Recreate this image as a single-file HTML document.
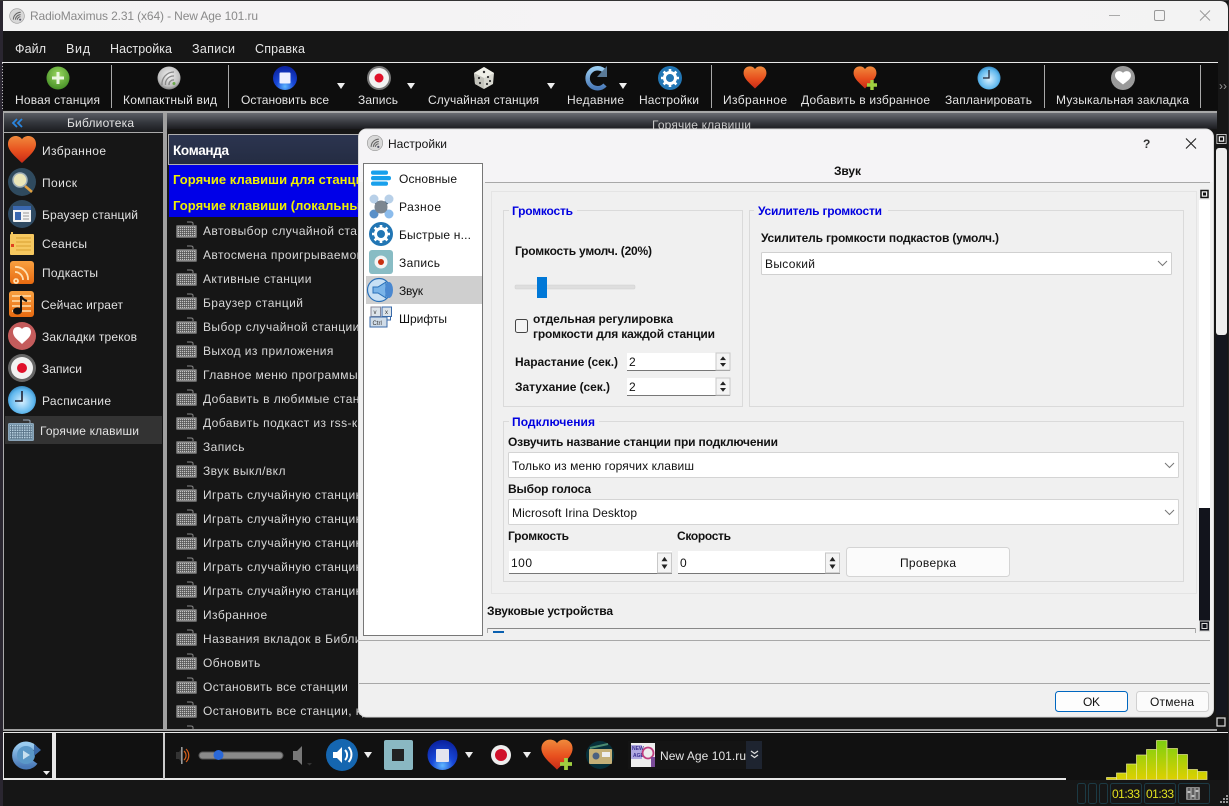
<!DOCTYPE html>
<html lang="ru">
<head>
<meta charset="utf-8">
<title>RadioMaximus</title>
<style>
html,body{margin:0;padding:0;background:#161616;width:1229px;height:806px;overflow:hidden}
svg{display:block;position:absolute;left:0;top:0}
text{font-family:"Liberation Sans","DejaVu Sans",sans-serif;font-size:12px;white-space:pre}
.w{fill:#e4e4e4}
.m{fill:#e6e6e6;font-size:12.5px}
.s{fill:#e2e2e2;font-size:12px}
.r{fill:#d8d8d8;font-size:12px;letter-spacing:.42px}
.b{fill:#111;font-weight:bold}
.n{fill:#111}
.g{fill:#0000e0;font-weight:bold}
.y{fill:#f0f000;font-weight:bold;font-size:13px}
</style>
</head>
<body>
<svg width="1229" height="806" viewBox="0 0 1229 806" xmlns="http://www.w3.org/2000/svg">
<defs>
<linearGradient id="hd" x1="0" y1="0" x2="0" y2="1"><stop offset="0" stop-color="#5a5d64"/><stop offset=".5" stop-color="#34373d"/><stop offset="1" stop-color="#1a1b1e"/></linearGradient>
<linearGradient id="hd2" x1="0" y1="0" x2="0" y2="1"><stop offset="0" stop-color="#6a6c72"/><stop offset=".55" stop-color="#3a3c42"/><stop offset="1" stop-color="#1c1c20"/></linearGradient>
<linearGradient id="cmd" x1="0" y1="0" x2="0" y2="1"><stop offset="0" stop-color="#2c3550"/><stop offset="1" stop-color="#242c42"/></linearGradient>
<linearGradient id="heart" x1="0" y1="0" x2="0" y2="1"><stop offset="0" stop-color="#f08a3c"/><stop offset=".55" stop-color="#e8501e"/><stop offset="1" stop-color="#c82a18"/></linearGradient>
<radialGradient id="green" cx=".5" cy=".35" r=".7"><stop offset="0" stop-color="#9ad860"/><stop offset="1" stop-color="#3f8a22"/></radialGradient>
<radialGradient id="silver" cx=".5" cy=".4" r=".65"><stop offset="0" stop-color="#f2f2f2"/><stop offset=".7" stop-color="#c0c0c0"/><stop offset="1" stop-color="#707070"/></radialGradient>
<radialGradient id="blueb" cx=".5" cy=".85" r=".85"><stop offset="0" stop-color="#60b8ff"/><stop offset=".42" stop-color="#1848d8"/><stop offset="1" stop-color="#0a209c"/></radialGradient>
<radialGradient id="clock" cx=".5" cy=".55" r=".6"><stop offset="0" stop-color="#d8f0ff"/><stop offset=".7" stop-color="#60b8ee"/><stop offset="1" stop-color="#2878b0"/></radialGradient>
<linearGradient id="rep" x1="0" y1="0" x2="0" y2="1"><stop offset="0" stop-color="#9accf0"/><stop offset="1" stop-color="#4a7ab8"/></linearGradient>
<linearGradient id="orange" x1="0" y1="0" x2="0" y2="1"><stop offset="0" stop-color="#f8a040"/><stop offset="1" stop-color="#e86a10"/></linearGradient>
<linearGradient id="eq" gradientUnits="userSpaceOnUse" x1="0" y1="740" x2="0" y2="779"><stop offset="0" stop-color="#7cd010"/><stop offset="1" stop-color="#dcd000"/></linearGradient>
<linearGradient id="tb" x1="0" y1="0" x2="1" y2="0"><stop offset="0" stop-color="#f3f3f3"/><stop offset=".5" stop-color="#f5f3f5"/><stop offset="1" stop-color="#f3f3f3"/></linearGradient>
<pattern id="keys" width="2" height="2" patternUnits="userSpaceOnUse"><rect width="2" height="2" fill="#555"/><rect width="1.2" height="1.2" fill="#c4c4c4"/></pattern>
<pattern id="keysb" width="2.4" height="2.4" patternUnits="userSpaceOnUse"><rect width="2.4" height="2.4" fill="#5a7488"/><rect width="1.5" height="1.5" fill="#b8d0e0"/></pattern>
<path id="hrt" d="M0 -9 C-3 -14 -13 -13 -13 -4.500 C-13 2 -5 8 0 13 C5 8 13 2 13 -4.500 C13 -13 3 -14 0 -9Z" fill="url(#heart)"/>
<g id="kb"><path d="M17 5V2.500Q17 1 15 1H11" fill="none" stroke="#888" stroke-width="1"/><rect x=".5" y="4.500" width="20" height="12" rx="1" fill="#8c8c8c" stroke="#666"/><rect x="2" y="6" width="17" height="9" fill="url(#keys)"/></g>
<g id="logo"><circle r="7" fill="#d8d8d8" stroke="#999" stroke-width=".6"/><path d="M-3.500 3.500a7 7 0 0 1 7-7M-1.500 3.500a5 5 0 0 1 5-4.800M.3 3.500a3 3 0 0 1 3-2.800" fill="none" stroke="#666" stroke-width="1"/><circle cx="3" cy="3.500" r="1" fill="#556"/></g>
<g id="spin"><rect x="0" y="0" width="14" height="18" fill="#f4f4f4" stroke="#c8c8c8"/><path d="M7 3.500l3 4h-6zM7 14.500l3-4h-6z" fill="#222"/></g>
<path id="dn" d="M0 0h8l-4 6z" fill="#eee"/>
<path id="chev" d="M0 0l4.500 4.500L9 0" fill="none" stroke="#777" stroke-width="1"/>
<g id="gear"><circle r="12" fill="#2276b4"/><circle r="5.500" fill="none" stroke="#fff" stroke-width="3"/><path d="M0-9v3M0 9V6M-9 0h3M9 0H6M-6.400-6.400l2.200 2.200M6.400 6.400L4.200 4.200M-6.400 6.400l2.200-2.200M6.400-6.400L4.200-4.200" stroke="#fff" stroke-width="2.600"/></g>
</defs>

<!-- window base -->
<rect width="1229" height="806" fill="#161616"/>
<rect x="0" y="0" width="1229" height="1" fill="#333"/>
<path d="M3 1H1220Q1228 1 1228 9V31H3Z" fill="url(#tb)"/>
<rect x="0" y="1" width="3" height="805" fill="#2a2630"/>
<rect x="1228" y="0" width="1" height="806" fill="#222"/>
<use href="#logo" transform="translate(17 16) scale(1.05)"/>
<text x="30" y="20" fill="#8a8a8a" textLength="228" lengthAdjust="spacing">RadioMaximus 2.31 (x64) - New Age 101.ru</text>
<path d="M1109 15.500h11" stroke="#aaa" stroke-width="1"/>
<rect x="1154.500" y="10.500" width="10" height="10" rx="1.500" fill="none" stroke="#999"/>
<path d="M1200 10.500l10 10M1210 10.500l-10 10" stroke="#999" stroke-width="1"/>

<!-- menu -->
<rect x="3" y="31" width="1225" height="31" fill="#161616"/>
<text class="m" x="15" y="53" textLength="31">Файл</text>
<text class="m" x="66" y="53" textLength="24">Вид</text>
<text class="m" x="110" y="53" textLength="62">Настройка</text>
<text class="m" x="192" y="53" textLength="43">Записи</text>
<text class="m" x="255" y="53" textLength="50">Справка</text>

<!-- toolbar -->
<rect x="2" y="62" width="1216" height="1" fill="#e8e8e8"/>
<rect x="3" y="63" width="1215" height="47" fill="#0d0d0d"/>
<path d="M2.500 63V110" stroke="#bbb" stroke-width="1" stroke-dasharray="1 2"/>
<g fill="#a8a8a8"><rect x="111" y="65" width="1" height="43"/><rect x="228" y="65" width="1" height="43"/><rect x="711" y="65" width="1" height="43"/><rect x="1044" y="65" width="1" height="43"/><rect x="1200" y="65" width="1" height="43"/></g>
<circle cx="58" cy="78" r="11.500" fill="url(#green)"/><path d="M58 72v12M52 78h12" stroke="#eaf6e0" stroke-width="3"/>
<circle cx="169" cy="78" r="11.500" fill="url(#silver)"/><path d="M162 85a12 12 0 0 1 12-13M165.500 85a8 8 0 0 1 8.500-9M169 85a4.500 4.500 0 0 1 5-5" fill="none" stroke="#8a8a8a" stroke-width="1.300"/><circle cx="174" cy="83.500" r="1.500" fill="#6aa84a"/>
<circle cx="285" cy="78" r="12" fill="url(#blueb)"/><rect x="279.500" y="72.500" width="11" height="11" rx="1" fill="#eef0ff"/>
<circle cx="379" cy="78" r="12" fill="#777"/><circle cx="379" cy="78" r="10" fill="#f2f2f2"/><circle cx="379" cy="78" r="4.500" fill="#e0102a"/>
<use href="#dn" x="337" y="83"/><use href="#dn" x="407" y="83"/><use href="#dn" x="547" y="83"/><use href="#dn" x="619" y="83"/>
<g transform="translate(484 78)"><path d="M0-11L10-5 9 6 0 11-9 6-10-5Z" fill="#d8d8d0"/><path d="M0-11L10-5 0 0-10-5Z" fill="#f0f0e8"/><path d="M0 0V11L-9 6-10-5Z" fill="#c4c4bc"/><g fill="#333"><circle cx="0" cy="-6" r="1.200"/><circle cx="-5" cy="0" r="1.100"/><circle cx="-4" cy="5" r="1.100"/><circle cx="4" cy="-1" r="1.100"/><circle cx="6" cy="3" r="1.100"/><circle cx="3" cy="6" r="1.100"/></g></g>
<path d="M605 71.500A10 10 0 1 0 605 85" fill="none" stroke="url(#rep)" stroke-width="4.500"/><path d="M607 66v11h-10z" fill="#5a7a98"/>
<use href="#gear" x="670" y="78"/>
<use href="#hrt" transform="translate(755 77) scale(.88)"/>
<use href="#hrt" transform="translate(865 77) scale(.88)"/><path d="M872 80v10M867 85h10" stroke="#a0d040" stroke-width="3.400"/>
<circle cx="989" cy="78" r="11.500" fill="url(#clock)"/><path d="M989 70v8h-6" fill="none" stroke="#223" stroke-width="1.300"/>
<circle cx="1123" cy="78" r="12" fill="#9a9a9a"/><path d="M1123 73c-2-3-8-2.500-8 2.500 0 3.500 4.500 6 8 9 3.500-3 8-5.500 8-9 0-5-6-5.500-8-2.500z" fill="#fff"/>
<text class="w" x="15" y="104" textLength="85">Новая станция</text>
<text class="w" x="123" y="104" textLength="94">Компактный вид</text>
<text class="w" x="241" y="104" textLength="88">Остановить все</text>
<text class="w" x="358" y="104" textLength="40">Запись</text>
<text class="w" x="428" y="104" textLength="111">Случайная станция</text>
<text class="w" x="567" y="104" textLength="57">Недавние</text>
<text class="w" x="639" y="104" textLength="60">Настройки</text>
<text class="w" x="723" y="104" textLength="64">Избранное</text>
<text class="w" x="801" y="104" textLength="129">Добавить в избранное</text>
<text class="w" x="945" y="104" textLength="87">Запланировать</text>
<text class="w" x="1056" y="104" textLength="133">Музыкальная закладка</text>
<text x="1219" y="90" fill="#999" style="font-size:12px">››</text>

<!-- left panel -->
<rect x="3" y="111" width="1214" height="2" fill="#a8a8a8"/>
<rect x="3" y="113" width="160" height="19" fill="url(#hd)"/>
<rect x="3" y="132" width="160" height="1" fill="#aaa"/>
<rect x="3" y="113" width="1" height="619" fill="#aaa"/>
<path d="M17 119l-4 4 4 4M22 119l-4 4 4 4" fill="none" stroke="#2a86e0" stroke-width="1.800"/>
<text class="s" x="67" y="127" textLength="67">Библиотека</text>
<rect x="163" y="113" width="4" height="619" fill="#a0a0a0"/>
<!-- sidebar icons -->
<use href="#hrt" transform="translate(22 149) scale(1.080)"/>
<circle cx="22" cy="182" r="14" fill="#2f4a5e"/><circle cx="20" cy="180" r="7" fill="#eae6b8" stroke="#a0b0b8" stroke-width="1.500"/><path d="M25 186l7 6" stroke="#e0a040" stroke-width="2.500"/>
<circle cx="22" cy="214" r="14" fill="#2f4a62"/><rect x="13" y="206" width="18" height="16" rx="1" fill="#f4f4f4"/><rect x="13" y="206" width="18" height="4" fill="#3a68b0"/><rect x="15" y="212" width="6" height="8" fill="#3a68b0"/><path d="M23 213h6M23 216h6M23 219h6" stroke="#999"/>
<rect x="10" y="234" width="24" height="21" rx="1" fill="#f6c860"/><path d="M16 238h15M16 242h15M16 246h15M16 250h15" stroke="#d8a030" stroke-width="1"/><rect x="11" y="232" width="2" height="3" fill="#f6c860"/><rect x="11" y="244" width="3" height="3" fill="#e04020"/>
<rect x="10" y="261" width="24" height="23" rx="3" fill="url(#orange)"/><path d="M16 279a2 2 0 1 0 .1 0M15 272a8 8 0 0 1 8 8M15 267a12 12 0 0 1 13 13" fill="none" stroke="#ffe0b0" stroke-width="1.800"/>
<rect x="9" y="291" width="25" height="26" rx="3" fill="url(#orange)"/><path d="M12 296h19M12 301h19M12 306h19M12 311h19" stroke="#ffe0b0" stroke-width="1.400"/><path d="M21 296V311" stroke="#111" stroke-width="2"/><ellipse cx="17.500" cy="311" rx="4.500" ry="3.500" fill="#111"/><path d="M21 296q2 4 6 5" fill="none" stroke="#111" stroke-width="2"/>
<circle cx="22" cy="336" r="14" fill="#c45c5c"/><path d="M22 329c-2-3-9-3-9 3 0 5 5 8 9 12 4-4 9-7 9-12 0-6-7-6-9-3z" fill="#fff"/>
<circle cx="22" cy="368" r="14" fill="#666"/><circle cx="22" cy="368" r="11" fill="#f2f2f2"/><circle cx="22" cy="368" r="5" fill="#e0102a"/>
<circle cx="22" cy="400" r="14" fill="url(#clock)"/><path d="M22 391v10h-7" fill="none" stroke="#223" stroke-width="1.600"/>
<rect x="5" y="416" width="157" height="28" fill="#333"/>
<path d="M30 423v-2q0-1-2-1h-5" fill="none" stroke="#9ab" stroke-width="1"/>
<rect x="8.500" y="423.500" width="25" height="17" rx="1" fill="#7a98ac" stroke="#8aa4b8"/><rect x="10" y="425" width="22" height="14" fill="url(#keysb)"/>
<g class="s">
<text class="s" x="42" y="155" textLength="64">Избранное</text>
<text class="s" x="42" y="187" textLength="35">Поиск</text>
<text class="s" x="42" y="219" textLength="96">Браузер станций</text>
<text class="s" x="42" y="248" textLength="45">Сеансы</text>
<text class="s" x="42" y="277" textLength="56">Подкасты</text>
<text class="s" x="41" y="309" textLength="82">Сейчас играет</text>
<text class="s" x="42" y="341" textLength="95">Закладки треков</text>
<text class="s" x="42" y="373" textLength="40">Записи</text>
<text class="s" x="42" y="405" textLength="69">Расписание</text>
<text class="s" x="40" y="435" textLength="99">Горячие клавиши</text>
</g>

<!-- main panel -->
<rect x="167" y="113" width="1050" height="16" fill="url(#hd2)"/>
<text x="652" y="129" fill="#c8c8c8" textLength="99">Горячие клавиши</text>
<rect x="168.500" y="134.500" width="230" height="30" fill="url(#cmd)" stroke="#b0b0b0"/>
<text x="173" y="155" fill="#fff" style="font-weight:bold;font-size:13.5px" textLength="56">Команда</text>
<rect x="169" y="165" width="230" height="52" fill="#0000e8"/>
<text class="y" x="173" y="184" letter-spacing=".05">Горячие клавиши для станций</text>
<text class="y" x="173" y="210" letter-spacing=".05">Горячие клавиши (локальные)</text>

<use href="#kb" x="176" y="221"/><text class="r" x="203" y="235">Автовыбор случайной станции</text>
<use href="#kb" x="176" y="245"/><text class="r" x="203" y="259">Автосмена проигрываемого</text>
<use href="#kb" x="176" y="269"/><text class="r" x="203" y="283">Активные станции</text>
<use href="#kb" x="176" y="293"/><text class="r" x="203" y="307">Браузер станций</text>
<use href="#kb" x="176" y="317"/><text class="r" x="203" y="331">Выбор случайной станции</text>
<use href="#kb" x="176" y="341"/><text class="r" x="203" y="355">Выход из приложения</text>
<use href="#kb" x="176" y="365"/><text class="r" x="203" y="379">Главное меню программы</text>
<use href="#kb" x="176" y="389"/><text class="r" x="203" y="403">Добавить в любимые станции</text>
<use href="#kb" x="176" y="413"/><text class="r" x="203" y="427">Добавить подкаст из rss-канала</text>
<use href="#kb" x="176" y="437"/><text class="r" x="203" y="451">Запись</text>
<use href="#kb" x="176" y="461"/><text class="r" x="203" y="475">Звук выкл/вкл</text>
<use href="#kb" x="176" y="485"/><text class="r" x="203" y="499">Играть случайную станцию</text>
<use href="#kb" x="176" y="509"/><text class="r" x="203" y="523">Играть случайную станцию</text>
<use href="#kb" x="176" y="533"/><text class="r" x="203" y="547">Играть случайную станцию</text>
<use href="#kb" x="176" y="557"/><text class="r" x="203" y="571">Играть случайную станцию</text>
<use href="#kb" x="176" y="581"/><text class="r" x="203" y="595">Играть случайную станцию</text>
<use href="#kb" x="176" y="605"/><text class="r" x="203" y="619">Избранное</text>
<use href="#kb" x="176" y="629"/><text class="r" x="203" y="643">Названия вкладок в Библиотеке</text>
<use href="#kb" x="176" y="653"/><text class="r" x="203" y="667">Обновить</text>
<use href="#kb" x="176" y="677"/><text class="r" x="203" y="691">Остановить все станции</text>
<use href="#kb" x="176" y="701"/><text class="r" x="203" y="715">Остановить все станции, кроме</text>
<use href="#kb" x="176" y="725"/>

<!-- right scrollbar -->
<rect x="1216" y="148" width="11" height="187" rx="3" fill="#eee"/>
<rect x="1216" y="335" width="11" height="380" fill="#14161e"/>
<g transform="translate(1221.500 139)"><rect x="-5" y="-5" width="10" height="10" fill="#f0f0f0"/><rect x="-3.500" y="-3.500" width="7" height="7" fill="none" stroke="#111" stroke-width="1.500"/><rect x="-1.500" y="-1.500" width="3" height="3" fill="#111"/></g>
<g transform="translate(1221 722)"><rect x="-4" y="-4" width="8" height="8" fill="none" stroke="#ddd" stroke-width="1.200"/></g>

<!-- bottom panels -->
<rect x="3" y="729" width="1214" height="2" fill="#a0a0a0"/>
<rect x="3" y="731" width="1225" height="49" fill="#111"/>
<rect x="3" y="732" width="1225" height="1" fill="#e8e8e8"/>
<rect x="3" y="778" width="1063" height="2" fill="#e8e8e8"/>
<rect x="3" y="733" width="1" height="46" fill="#e8e8e8"/>
<rect x="52" y="733" width="4" height="46" fill="#e8e8e8"/>
<rect x="163" y="733" width="2" height="46" fill="#ccc"/>
<path d="M35 749a11 11 0 1 0 0 13" fill="none" stroke="url(#rep)" stroke-width="6"/><circle cx="26" cy="755" r="9" fill="#5a98c8"/><path d="M23 750.500v9l7-4.500z" fill="#c8e0f0"/><path d="M34 744v12l7-6z" fill="#3a6aa8"/>
<path d="M43 771h7l-3.500 4z" fill="#eee"/>
<!-- player -->
<path d="M176 752h3l4-5v17l-4-5h-3z" fill="#333"/><rect x="181" y="747" width="1.500" height="17" fill="#999"/><path d="M184 751a6 6 0 0 1 0 9M186 749a9 9 0 0 1 0 13" fill="none" stroke="#d8601c" stroke-width="1.200"/>
<rect x="199" y="752" width="84" height="7" rx="3.500" fill="#8a8a8a" stroke="#555"/><circle cx="218.500" cy="755" r="5" fill="#2a68d8"/>
<path d="M293 751h4l5-5v19l-5-5h-4z" fill="#777"/><path d="M307 763h5l-2.500 2.500z" fill="#333"/>
<circle cx="342" cy="755" r="16" fill="#1566b0"/><path d="M333 752h4l5-5v16l-5-5h-4z" fill="#fff"/><path d="M345 750a7 7 0 0 1 0 10M348.500 747a11 11 0 0 1 0 15" fill="none" stroke="#fff" stroke-width="2"/>
<use href="#dn" x="364" y="752"/>
<rect x="384" y="740" width="29" height="30" rx="2" fill="#8ab8c2"/><rect x="392" y="749" width="12" height="12" fill="#222"/>
<circle cx="442.500" cy="755" r="15" fill="url(#blueb)"/><rect x="436" y="749" width="13" height="13" rx="1" fill="#e4e4ee"/>
<use href="#dn" x="465" y="752"/>
<circle cx="501" cy="755" r="10" fill="#eee"/><circle cx="501" cy="755" r="6" fill="#d0102a"/>
<use href="#dn" x="523" y="752"/>
<use href="#hrt" transform="translate(557 754) scale(1.200)"/><path d="M566 758v12M560 764h12" stroke="#a0d040" stroke-width="3.800"/>
<circle cx="600" cy="755" r="14" fill="#07303a"/><rect x="589" y="749" width="23" height="15" rx="1" fill="#c4b078"/><path d="M590 748l18-4" stroke="#4a8a70" stroke-width="2"/><circle cx="596" cy="756" r="3.500" fill="#4a6080"/><rect x="602" y="752" width="8" height="5" fill="#eee"/>
<rect x="628" y="741" width="134" height="28" fill="#141414"/>
<rect x="746" y="741" width="16" height="28" fill="#1e2430"/>
<rect x="631" y="743" width="24" height="24" fill="#eee"/><rect x="631" y="745" width="11" height="14" fill="#b0a8e0"/><text x="632" y="750" fill="#3a3090" style="font-size:5px;font-weight:bold">NEW</text><text x="633" y="757" fill="#3a3090" style="font-size:5px;font-weight:bold">AGE</text><circle cx="648" cy="753" r="5.500" fill="none" stroke="#c04080" stroke-width="1.800"/><rect x="651" y="757" width="4" height="10" fill="#7a4a98"/>
<text x="660" y="760" fill="#e4e4e4" textLength="86">New Age 101.ru</text>
<path d="M751 751l3.500 2.500 3.500-2.500M751 755l3.500 2.500 3.500-2.500" fill="none" stroke="#ddd" stroke-width="1.200"/>
<!-- equalizer -->
<g fill="url(#eq)" stroke="#e8e890" stroke-width=".7">
<rect x="1106.500" y="777.500" width="10" height="2"/><rect x="1116.500" y="773" width="10" height="6.500"/><rect x="1126.500" y="764" width="10" height="15.500"/><rect x="1136.500" y="755" width="10" height="24.500"/><rect x="1146.500" y="749.500" width="10" height="30"/><rect x="1156.500" y="740.500" width="10.500" height="39"/><rect x="1167" y="748.500" width="10.500" height="31"/><rect x="1177.500" y="754.500" width="10" height="25"/><rect x="1187.500" y="769.500" width="10" height="10"/><rect x="1197.500" y="771.500" width="9.500" height="8"/>
</g>
<!-- status -->
<rect x="3" y="780" width="1225" height="26" fill="#161616"/>
<g fill="none" stroke="#1c3a44"><rect x="1077.500" y="783.500" width="8" height="20" rx="2"/><rect x="1088.500" y="783.500" width="8" height="20" rx="2"/><rect x="1099.500" y="783.500" width="8" height="20" rx="2"/><rect x="1110.500" y="783.500" width="31" height="20" rx="2"/><rect x="1144.500" y="783.500" width="31" height="20" rx="2"/><rect x="1178.500" y="783.500" width="31" height="20" rx="2"/></g>
<text x="1112" y="798" fill="#e0e020" textLength="28">01:33</text>
<text x="1146" y="798" fill="#e0e020" textLength="28">01:33</text>
<rect x="1186" y="787" width="14" height="13" rx="1" fill="#8a8a8a"/><path d="M1189 788v11M1193 788v11M1197 788v11" stroke="#333" stroke-width="1"/><path d="M1187.500 792h3M1191.500 796h3M1195.500 791h3" stroke="#ddd" stroke-width="1.500"/>
<g fill="#999"><rect x="1226" y="795" width="2" height="2"/><rect x="1223" y="798" width="2" height="2"/><rect x="1226" y="798" width="2" height="2"/><rect x="1220" y="801" width="2" height="2"/><rect x="1223" y="801" width="2" height="2"/><rect x="1226" y="801" width="2" height="2"/></g>

<!-- DIALOG -->
<rect x="358.500" y="129" width="855" height="588" rx="8" fill="#f0f0f0" stroke="#d8d8d8"/>
<path d="M359 182V137Q359 129.500 367 129.500H1205Q1213 129.500 1213 137V182Z" fill="#f5f4f6"/>
<use href="#logo" transform="translate(375 143) scale(1.100)"/>
<text class="n" x="388" y="148" textLength="59">Настройки</text>
<text class="n" x="1143" y="148" style="font-weight:bold;fill:#333">?</text>
<path d="M1186 138.500l10 10M1196 138.500l-10 10" stroke="#222" stroke-width="1.100"/>
<text class="b" x="834" y="175" textLength="27">Звук</text>
<rect x="485" y="182" width="725" height="1" fill="#a8a8a8"/>
<!-- list -->
<rect x="363.500" y="163.500" width="119" height="472" fill="#fff" stroke="#777"/>
<rect x="366" y="276" width="116" height="28" fill="#cfcfcf"/>
<g fill="#18a0ec"><rect x="371" y="170.500" width="17" height="4.200" rx="2"/><rect x="371" y="176" width="20" height="4.200" rx="2"/><rect x="371" y="181.500" width="17" height="4.200" rx="2"/></g>
<path d="M373 199l17 16M390 199l-17 16" stroke="#3a5a78" stroke-width="4"/><circle cx="374" cy="199" r="4.500" fill="#b8d0e8"/><circle cx="389" cy="199" r="4.500" fill="#b8d0e8"/><circle cx="374" cy="214" r="4.500" fill="#5a90c8"/><circle cx="389" cy="214" r="4.500" fill="#8cbcec"/><circle cx="381" cy="207" r="6.500" fill="#7c8690"/>
<use href="#gear" transform="translate(381 234)"/>
<rect x="369" y="250" width="24" height="24" rx="3" fill="#88bcc4"/><circle cx="381" cy="262" r="6.500" fill="#f4f4f4"/><circle cx="381" cy="262" r="3" fill="#c83010"/>
<g transform="translate(381 290)"><ellipse cx="-2" cy="0" rx="11.500" ry="11.500" fill="#c8e0f4" stroke="#2a70b8" stroke-width="1.200"/><path d="M-8 -3h5l8-5v16l-8-5h-5z" fill="#7ab4e8" stroke="#2a70b8"/><ellipse cx="8" cy="0" rx="4" ry="8" fill="#4a88d0"/></g>
<g><rect x="371" y="307" width="9.500" height="9.500" fill="#dde4ea" stroke="#889"/><rect x="382" y="307" width="9.500" height="9.500" fill="#dde4ea" stroke="#3a6aa8"/><rect x="370" y="317" width="17" height="10" fill="#d0dce8" stroke="#3a6aa8"/><path d="M387 320h3.500v-3" fill="none" stroke="#3a6aa8"/>
<text x="373.500" y="314" fill="#333" style="font-size:6px">v</text><text x="385" y="314" fill="#333" style="font-size:6px">x</text><text x="372.500" y="325" fill="#333" style="font-size:6px">Ctrl</text></g>
<text class="n" x="399" y="183" textLength="58">Основные</text>
<text class="n" x="399" y="211" textLength="42">Разное</text>
<text class="n" x="399" y="239" textLength="72">Быстрые н...</text>
<text class="n" x="399" y="267" textLength="41">Запись</text>
<text class="n" x="399" y="295" textLength="24">Звук</text>
<text class="n" x="399" y="323" textLength="48">Шрифты</text>

<!-- content frame -->
<rect x="491.500" y="191.500" width="705" height="402" fill="none" stroke="#e4e4e4"/>
<!-- group Громкость -->
<rect x="503.500" y="210.500" width="239" height="196" fill="none" stroke="#dadada"/>
<rect x="509" y="205" width="68" height="10" fill="#f0f0f0"/>
<text class="g" x="512" y="215" textLength="61">Громкость</text>
<text class="b" x="515" y="255" textLength="137">Громкость умолч. (20%)</text>
<rect x="515" y="285" width="120" height="4" rx="1" fill="#dedede" stroke="#d0d0d0" stroke-width=".5"/>
<rect x="537" y="277" width="10" height="21" fill="#0078d7"/>
<rect x="515.500" y="319.500" width="12" height="13" rx="2" fill="#f4f4f4" stroke="#444"/>
<text class="b" x="533" y="323" textLength="140">отдельная регулировка</text>
<text class="b" x="533" y="338" textLength="182">громкости для каждой станции</text>
<text class="b" x="515" y="366" textLength="103">Нарастание (сек.)</text>
<rect x="627" y="353" width="103" height="17" fill="#fff"/><rect x="627" y="370" width="103" height="1" fill="#777"/>
<text class="n" x="629" y="366">2</text><use href="#spin" transform="translate(716 353) scale(1 .95)"/>
<text class="b" x="515" y="391" textLength="95">Затухание (сек.)</text>
<rect x="627" y="378" width="103" height="17" fill="#fff"/><rect x="627" y="395" width="103" height="1" fill="#777"/>
<text class="n" x="629" y="391">2</text><use href="#spin" transform="translate(716 378) scale(1 .95)"/>
<!-- group Усилитель -->
<rect x="749.500" y="210.500" width="434" height="196" fill="none" stroke="#dadada"/>
<rect x="754" y="205" width="134" height="10" fill="#f0f0f0"/>
<text class="g" x="758" y="215" textLength="124">Усилитель громкости</text>
<text class="b" x="761" y="242" textLength="238">Усилитель громкости подкастов (умолч.)</text>
<rect x="761.500" y="252.500" width="410" height="22" rx="1" fill="#fff" stroke="#d0d0d0"/>
<text class="n" x="765" y="268" textLength="50">Высокий</text>
<use href="#chev" x="1158" y="261"/>
<!-- group Подключения -->
<rect x="503.500" y="421.500" width="680" height="160" fill="none" stroke="#dadada"/>
<rect x="509" y="416" width="90" height="10" fill="#f0f0f0"/>
<text class="g" x="512" y="426" textLength="83">Подключения</text>
<text class="b" x="508" y="446" textLength="270">Озвучить название станции при подключении</text>
<rect x="508.500" y="452.500" width="670" height="25" rx="1" fill="#fff" stroke="#d4d4d4"/>
<text class="n" x="512" y="470" textLength="182">Только из меню горячих клавиш</text>
<use href="#chev" x="1165" y="463"/>
<text class="b" x="508" y="493" textLength="83">Выбор голоса</text>
<rect x="508.500" y="499.500" width="670" height="25" rx="1" fill="#fff" stroke="#d4d4d4"/>
<text class="n" x="512" y="517" textLength="125">Microsoft Irina Desktop</text>
<use href="#chev" x="1165" y="510"/>
<text class="b" x="508" y="540" textLength="61">Громкость</text>
<text class="b" x="677" y="540" textLength="54">Скорость</text>
<rect x="509" y="551" width="163" height="22" fill="#fff"/><rect x="509" y="573" width="163" height="1" fill="#777"/>
<text class="n" x="511" y="567" textLength="21">100</text><use href="#spin" transform="translate(657.500 553) scale(1 1.100)"/>
<rect x="678" y="551" width="162" height="22" fill="#fff"/><rect x="678" y="573" width="162" height="1" fill="#777"/>
<text class="n" x="680" y="567">0</text><use href="#spin" transform="translate(825.500 553) scale(1 1.100)"/>
<rect x="846.500" y="547.500" width="163" height="29" rx="3" fill="#fbfbfb" stroke="#d4d4d4"/>
<text class="n" x="900" y="567" textLength="56">Проверка</text>
<text class="b" x="487" y="615" textLength="126">Звуковые устройства</text>
<rect x="487" y="628" width="709" height="1" fill="#888"/>
<rect x="487" y="628" width="1" height="5" fill="#aaa"/><rect x="1195" y="628" width="1" height="5" fill="#aaa"/>
<rect x="493" y="631" width="11" height="2" fill="#0a60b0"/>
<!-- dialog inner scrollbar -->
<rect x="1199" y="200" width="11" height="308" fill="#fff"/>
<rect x="1199" y="508" width="11" height="118" fill="#12141c"/>
<g transform="translate(1204.500 194)"><rect x="-5" y="-5" width="10" height="10" fill="#f0f0f0"/><rect x="-3.500" y="-3.500" width="7" height="7" fill="none" stroke="#111" stroke-width="1.500"/><rect x="-1.500" y="-1.500" width="3" height="3" fill="#111"/></g>
<g transform="translate(1204.500 626)"><rect x="-5" y="-5" width="10" height="10" fill="#12141c" stroke="#ccc"/><rect x="-2.500" y="-2.500" width="5" height="5" fill="none" stroke="#ddd"/></g>
<rect x="359" y="640" width="851" height="1" fill="#a8a8a8"/>
<rect x="359" y="683" width="851" height="1" fill="#a8a8a8"/>
<rect x="1055.500" y="691.500" width="72" height="20" rx="3" fill="#fdfdfd" stroke="#0067c0"/>
<text class="n" x="1083" y="706" textLength="17">OK</text>
<rect x="1136.500" y="691.500" width="72" height="20" rx="3" fill="#fbfbfb" stroke="#d0d0d0"/>
<text class="n" x="1150" y="706" textLength="44">Отмена</text>
</svg>
</body>
</html>
